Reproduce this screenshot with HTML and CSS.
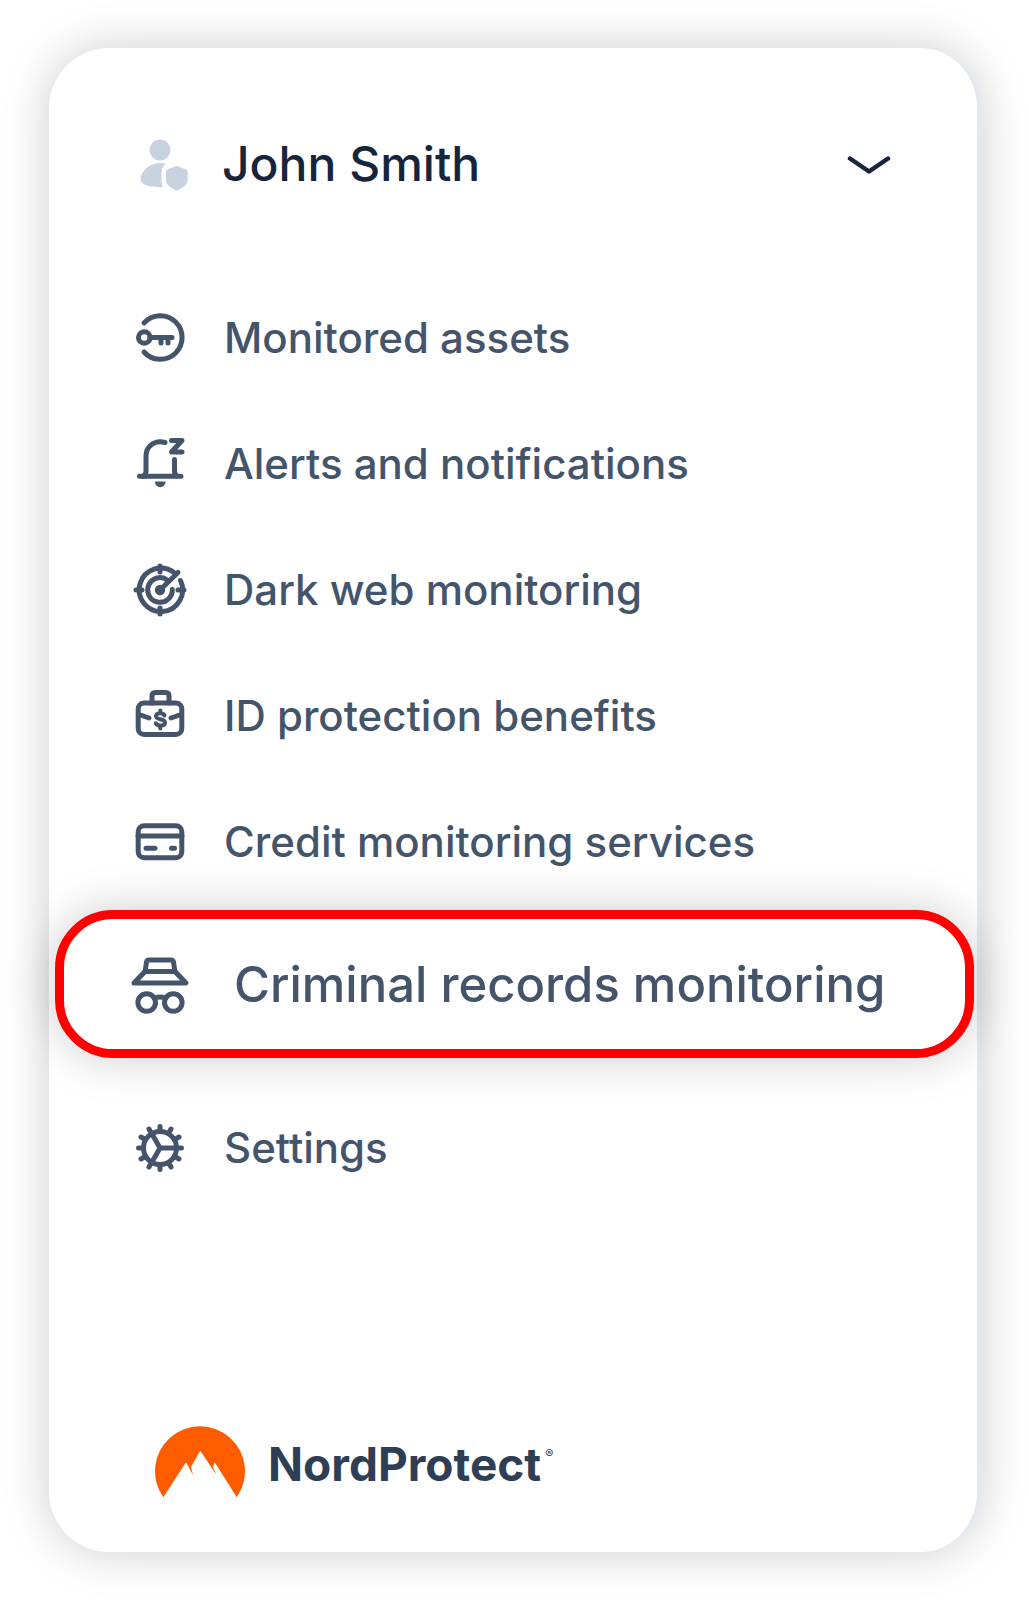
FILE: index.html
```html
<!DOCTYPE html>
<html lang="en">
<head>
  <meta charset="UTF-8" />
  <meta name="viewport" content="width=device-width, initial-scale=1.0" />
  <title>NordProtect</title>
  <link rel="stylesheet" href="styles.css">
</head>
<body>
  <aside class="sidebar">
    <button class="profile" type="button">
      <svg class="avatar" viewBox="0 0 56 56" aria-hidden="true">
        <circle cx="28" cy="13" r="10.5" />
        <path d="M34.5 27C24 23.500 12.500 29 9 39C7 46.500 13 50.300 31 50.300C29.500 48 29.500 46 29.500 42V34C29.500 30.500 31.500 28.500 34.500 27Z" />
        <path d="M44.700 28.700L54 32.500Q55.700 33 55.700 34.500V43C55.700 48 50 51.500 44.700 53.500C39.500 51.500 34 48 34 43V34.500Q34 33 35.500 32.500Z" />
      </svg>
      <span class="profile-name">John Smith</span>
      <svg class="chevron" viewBox="0 0 44 24" aria-hidden="true">
        <path d="M3 5.500L22 18.500L41 5.500" />
      </svg>
    </button>

    <nav class="menu">
      <a class="menu-item" href="#assets">
        <svg class="icon" viewBox="0 0 56 56" aria-hidden="true">
          <path d="M12 13A21.800 21.800 0 1 1 12 42" />
          <circle cx="12.300" cy="27.500" r="5.800" />
          <path d="M18 27.500H40M29 28V33M36 28V33" />
        </svg>
        <span class="label">Monitored assets</span>
      </a>
      <a class="menu-item" href="#alerts">
        <svg class="icon" viewBox="0 0 56 56" aria-hidden="true">
          <path d="M33 6.500C22 3.500 14 11 14 20V35Q14 38 11.500 40.300" />
          <path d="M7.500 40.300H49M42.500 23.500V35Q42.500 38 45 40.300" />
          <path d="M39.500 4.500H50L39.500 16H50" />
          <path class="solid" d="M23 45.500H33.500C33.500 53 23 53 23 45.500Z" />
        </svg>
        <span class="label">Alerts and notifications</span>
      </a>
      <a class="menu-item" href="#dark-web">
        <svg class="icon" viewBox="0 0 56 56" aria-hidden="true">
          <path d="M48.500 18.500A21.700 21.700 0 1 1 42 10.500" />
          <path d="M40.300 27.500A12.300 12.300 0 1 1 35.500 18.200" />
          <path d="M28 28L46 10.500M28 4V10M28 46V52M4 28H10M46 28H52" />
          <circle class="solid" cx="28" cy="28" r="5.200" />
        </svg>
        <span class="label">Dark web monitoring</span>
      </a>
      <a class="menu-item" href="#benefits">
        <svg class="icon" viewBox="0 0 56 56" aria-hidden="true">
          <rect x="6.200" y="15" width="43.600" height="31.500" rx="6" />
          <path d="M20 15V8Q20 4.500 23.500 4.500H33.500Q37 4.500 37 8V15" />
          <path d="M7 26.500L17 30M49 26.500L39 30" />
          <path class="thin" d="M32.500 27.500C31 24.500 24 24.500 24 28.300C24 32 33 30.500 33 34.500C33 38.500 25.500 38.500 23.800 35.300M28.300 22.500V25M28.300 38V40.500" />
        </svg>
        <span class="label">ID protection benefits</span>
      </a>
      <a class="menu-item" href="#credit">
        <svg class="icon" viewBox="0 0 56 56" aria-hidden="true">
          <rect x="6.200" y="11.700" width="43.600" height="32" rx="6" />
          <path d="M6 22H50M14 34.300H23M39.500 34.300H42.500" />
        </svg>
        <span class="label">Credit monitoring services</span>
      </a>
      <a class="menu-item highlighted" href="#criminal">
        <svg class="icon" viewBox="0 0 60 60" aria-hidden="true">
          <path d="M15 18L16.500 8Q17 6 19 6H41Q43 6 43.500 8L45 18" />
          <path d="M15 17.500H45L56 29H4Z" />
          <circle cx="16.700" cy="48.500" r="8.800" />
          <circle cx="43.300" cy="48.500" r="8.800" />
          <path d="M24 44Q30 42 36 44" />
        </svg>
        <span>Criminal records monitoring</span>
      </a>
      <a class="menu-item" href="#settings">
        <svg class="icon" viewBox="0 0 56 56" aria-hidden="true">
          <circle cx="28" cy="28" r="16.500" />
          <path d="M28 28H44M28 28L20 14M28 28L20 42" />
          <path d="M28 11V6.500M28 45V49.500M11 28H6.500M45 28H49.500M36.500 13.300L39 9M19.500 42.700L17 47M42.700 19.500L47 17M13.300 36.500L9 39M19.500 13.300L17 9M36.500 42.700L39 47M13.300 19.500L9 17M42.700 36.500L47 39" />
        </svg>
        <span class="label">Settings</span>
      </a>
    </nav>

    <footer class="brand">
      <svg class="brand-logo" viewBox="0 0 90 72" aria-hidden="true">
        <path d="M8.300 71.300A45 45 0 1 1 81.700 71.300L59.700 36.300L58 41L61.500 49L45.200 24.700L36 41L38 49L31 36.300Z" />
      </svg>
      <span class="brand-name">NordProtect</span>
      <span class="brand-mark">®</span>
    </footer>
  </aside>
</body>
</html>
```
FILE: styles.css
```css
* {
  box-sizing: border-box;
}
body {
  margin: 0;
  padding: 48px 48px 48px 49px;
  background: #ffffff;
  font-family: 'Inter', sans-serif;
  color: #43546b;
}
.sidebar {
  display: flex;
  flex-direction: column;
  min-height: calc(100vh - 96px);
  padding: 54px 0;
  background: #ffffff;
  border-right: 4px solid #e2e8f0;
  border-radius: 60px;
  box-shadow: 0 0 48px rgba(0, 0, 0, 0.2);
}
.profile {
  display: flex;
  align-items: center;
  gap: 34px;
  width: 100%;
  height: 126px;
  padding: 0 86px 0 83px;
  border: none;
  background: none;
  font-family: inherit;
  font-size: 48px;
  font-weight: 500;
  color: #16243c;
  text-align: left;
  cursor: pointer;
}
.profile-name {
  flex: 1;
  padding-bottom: 4px;
}
.avatar {
  width: 56px;
  height: 56px;
  fill: #c9d3e0;
}
.chevron {
  width: 44px;
  height: 24px;
  fill: none;
  stroke: #16243c;
  stroke-width: 4.5;
  stroke-linecap: round;
  stroke-linejoin: round;
}
.menu {
  display: flex;
  flex-direction: column;
  margin-top: 47px;
}
.menu-item {
  display: flex;
  align-items: center;
  gap: 36px;
  height: 126px;
  padding: 0 83px;
  font-size: 42px;
  font-weight: 500;
  color: inherit;
  text-decoration: none;
  white-space: nowrap;
}
.label {
  padding-bottom: 2px;
}
.icon {
  flex: none;
  width: 56px;
  height: 56px;
  fill: none;
  stroke: #43546b;
  stroke-width: 5;
  stroke-linecap: round;
  stroke-linejoin: round;
}
.icon .solid {
  fill: #43546b;
  stroke: none;
}
.icon .thin {
  stroke-width: 4;
}
.highlighted {
  gap: 44px;
  height: 148px;
  margin: 5px 3px 27px 6px;
  padding: 0 66px;
  border: 9px solid #ff0000;
  border-radius: 58px;
  background: #ffffff;
  box-shadow: 0 0 48px rgba(0, 0, 0, 0.2);
  font-size: 49px;
}
.highlighted .icon {
  width: 60px;
  height: 60px;
}
.brand {
  display: flex;
  align-items: center;
  margin-top: auto;
  padding: 0 106px;
  color: #2e3f55;
}
.brand-logo {
  width: 90px;
  height: 72px;
  margin-right: 23px;
  fill: #ff5c00;
}
.brand-name {
  padding-top: 4px;
  font-size: 46px;
  font-weight: 700;
}
.brand-mark {
  align-self: flex-start;
  margin: 20px 0 0 4px;
  font-size: 12px;
}
```
